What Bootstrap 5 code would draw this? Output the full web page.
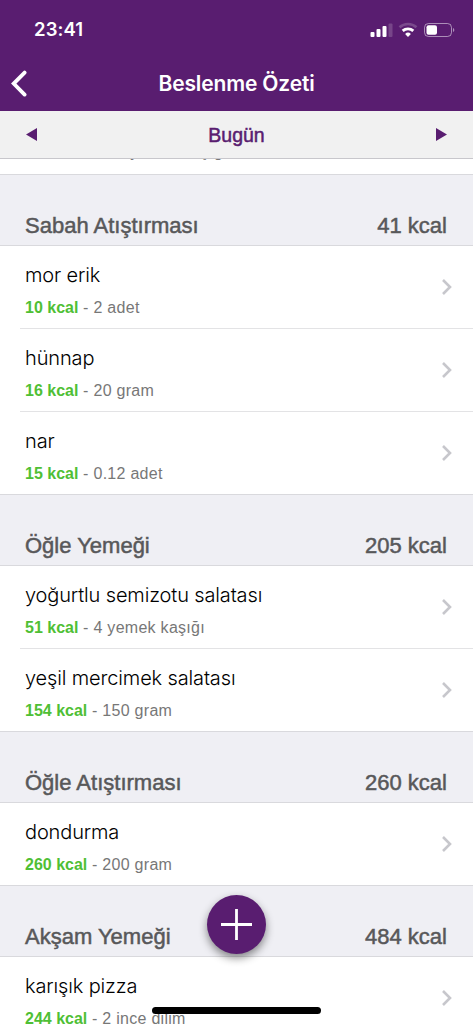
<!DOCTYPE html>
<html lang="tr">
<head>
  <meta charset="UTF-8">
  <meta name="viewport" content="width=device-width, initial-scale=1.0">
  <link href="https://cdn.jsdelivr.net/npm/bootstrap@5.3.7/dist/css/bootstrap.min.css" rel="stylesheet">
  <title>Beslenme Özeti</title>
  <style>
    body {
      font-family: "Liberation Sans", Arial, sans-serif;
      height: 1024px;
      overflow: hidden;
      background-color: #fff;
    }

    .top-area {
      height: 111px;
      background-color: #591d70;
      color: #fff;
      font-family: Inter, sans-serif;
    }

    .status-bar {
      height: 57px;
      padding: 2px 17px 0 34px;
    }

    .clock {
      font-size: 18.5px;
      font-weight: 600;
      letter-spacing: 0.1px;
    }

    .title-bar {
      height: 54px;
    }

    .side-slot {
      width: 40px;
      padding-left: 10px;
    }

    .page-title {
      font-size: 21px;
      font-weight: 600;
      letter-spacing: -0.15px;
    }

    .date-bar {
      height: 48px;
      padding: 0 26px;
      background-color: #f1f1f1;
      border-bottom: 1px solid #c8c7cc;
      color: #591d70;
    }

    .day-label {
      font-size: 19.5px;
      padding-top: 2px;
      -webkit-text-stroke: 0.5px #591d70;
    }

    /* list item scrolled under the date bar */
    .cut-row {
      height: 15px;
      padding-left: 25px;
      overflow: hidden;
    }

    .cut-row .food-info {
      margin-top: -17px;
    }

    .meal-header {
      height: 72px;
      padding: 0 26px 6px 25px;
      background-color: #efeff4;
      border-top: 1px solid #d9d9dd;
      border-bottom: 1px solid #d9d9dd;
      color: #58585a;
      font-size: 22px;
      line-height: 26px;
      -webkit-text-stroke: 0.5px #58585a;
    }

    .food-row {
      height: 83px;
      margin-left: 20px;
      padding: 0 20px 0 5px;
      border-bottom: 1px solid #e3e3e5;
    }

    .food-row:last-child {
      height: 82px;
      border-bottom: 0;
    }

    .food-text {
      padding-top: 5px;
    }

    .food-name {
      font-family: Inter, sans-serif;
      font-weight: 300;
      font-size: 20px;
      line-height: 26px;
      letter-spacing: -0.14px;
      margin-bottom: 10px;
      color: #000;
    }

    .food-info {
      font-size: 16px;
      line-height: 20px;
      letter-spacing: 0.28px;
      color: #777;
    }

    .kcal {
      color: #4fbf35;
      font-weight: 700;
      letter-spacing: 0;
    }

    .add-btn {
      position: fixed;
      left: 207px;
      top: 895px;
      width: 59px;
      height: 59px;
      background-color: #591d70;
      box-shadow: 0 4px 9px rgba(0, 0, 0, 0.45);
    }

    .home-line {
      position: fixed;
      left: 152px;
      top: 1007px;
      width: 169px;
      height: 7px;
      background-color: #000;
    }
  </style>
</head>
<body>
  <!-- Status bar and title -->
  <header class="top-area">
    <div class="status-bar d-flex align-items-center justify-content-between">
      <span class="clock">23:41</span>
      <svg width="86" height="16" viewBox="0 0 86 16" fill="#fff">
        <rect x="0.5" y="10" width="4" height="5" rx="1"/>
        <rect x="6.5" y="7" width="4" height="8" rx="1"/>
        <rect x="12.5" y="4" width="4" height="11" rx="1"/>
        <rect x="18.5" y="1.5" width="4" height="13.5" rx="1" opacity="0.18"/>
        <path d="M29.5 5.3a12.5 12.5 0 0 1 17 0" fill="none" stroke="#fff" stroke-width="2.6" opacity="0.2"/>
        <path d="M32.7 8.9a7.8 7.8 0 0 1 10.6 0" fill="none" stroke="#fff" stroke-width="2.8"/>
        <path d="M38 15l-2.9-3.1a4.2 4.2 0 0 1 5.8 0z"/>
        <rect x="54.5" y="1.5" width="27" height="13" rx="4" fill="none" stroke="#fff" opacity="0.5"/>
        <rect x="56.5" y="3.3" width="10.5" height="9.4" rx="2"/>
        <path d="M83 6v4c1.8-.6 1.8-3.4 0-4z" opacity="0.5"/>
      </svg>
    </div>
    <div class="title-bar d-flex align-items-center justify-content-between">
      <div class="side-slot d-flex">
        <svg width="18" height="28" viewBox="0 0 18 28" fill="none" stroke="#fff" stroke-width="3.8" stroke-linecap="round" stroke-linejoin="miter">
          <path d="M14.6 2.6L3.7 13.6l10.9 11"/>
        </svg>
      </div>
      <span class="page-title">Beslenme Özeti</span>
      <div class="side-slot"></div>
    </div>
  </header>

  <!-- Day switcher -->
  <div class="date-bar d-flex align-items-center justify-content-between">
    <svg width="11" height="13" viewBox="0 0 11 13" fill="#591d70"><path d="M0 6.5L11 0v13z"/></svg>
    <span class="day-label">Bugün</span>
    <svg width="11" height="13" viewBox="0 0 11 13" fill="#591d70"><path d="M11 6.5L0 0v13z"/></svg>
  </div>

  <main id="meals">
    <div class="cut-row">
      <div class="food-info"><span class="kcal">120 kcal</span> - 1.5 yemek kaşığı</div>
    </div>
  </main>

  <button class="add-btn btn rounded-circle p-0 border-0 d-flex align-items-center justify-content-center" type="button" aria-label="Ekle">
    <svg width="31" height="31" viewBox="0 0 31 31" stroke="#fff" stroke-width="2.8"><path d="M15.5 0v31M0 15.5h31"/></svg>
  </button>
  <div class="home-line rounded-pill"></div>

  <script>
    const meals = [
      { name: 'Sabah Atıştırması', kcal: 41, foods: [['mor erik', 10, '2 adet'], ['hünnap', 16, '20 gram'], ['nar', 15, '0.12 adet']] },
      { name: 'Öğle Yemeği', kcal: 205, foods: [['yoğurtlu semizotu salatası', 51, '4 yemek kaşığı'], ['yeşil mercimek salatası', 154, '150 gram']] },
      { name: 'Öğle Atıştırması', kcal: 260, foods: [['dondurma', 260, '200 gram']] },
      { name: 'Akşam Yemeği', kcal: 484, foods: [['karışık pizza', 244, '2 ince dilim']] }
    ];

    const list = document.getElementById('meals');

    // Build one section per meal
    meals.forEach(meal => {
      const section = document.createElement('section');
      section.innerHTML = `
        <div class="meal-header d-flex align-items-end justify-content-between">
          <span>${meal.name}</span>
          <span>${meal.kcal} kcal</span>
        </div>
        ${meal.foods.map(([name, kcal, amount]) => `
          <div class="food-row d-flex align-items-center justify-content-between">
            <div class="food-text">
              <div class="food-name">${name}</div>
              <div class="food-info"><span class="kcal">${kcal} kcal</span> - ${amount}</div>
            </div>
            <svg width="12" height="18" viewBox="0 0 12 18" fill="none" stroke="#c7c7cc" stroke-width="2.6">
              <path d="M2 2l7 7-7 7"/>
            </svg>
          </div>
        `).join('')}
      `;
      list.appendChild(section);
    });
  </script>

  <script src="https://cdn.jsdelivr.net/npm/bootstrap@5.3.7/dist/js/bootstrap.bundle.min.js"></script>
</body>
</html>
